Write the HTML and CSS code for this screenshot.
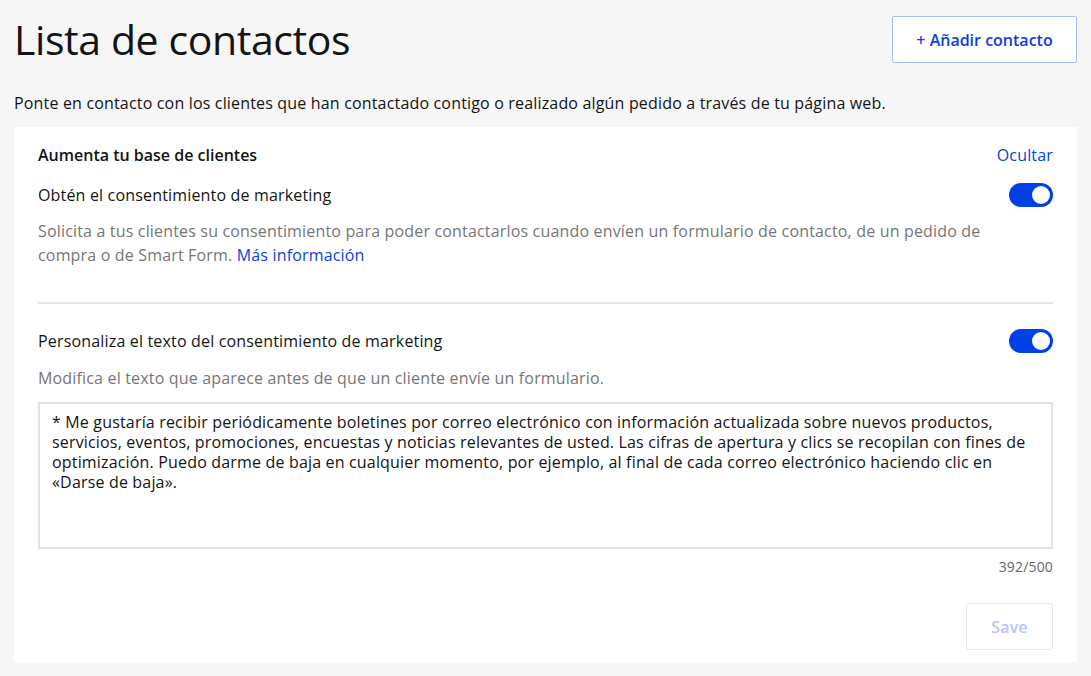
FILE: index.html
```html
<html>

<head>
    <title>Lista de contactos</title>
    <link rel="stylesheet" href="styles.css">
</head>

<body>
    <div id="content">
        <div class="header">
            <h1>Lista de contactos</h1>
            <button class="add">+ Añadir contacto</button>
        </div>
        <p class="intro">Ponte en contacto con los clientes que han contactado contigo o realizado algún pedido a través de tu página web.</p>
        <div class="card">
            <div class="row title-row">
                <h2>Aumenta tu base de clientes</h2>
                <a class="link">Ocultar</a>
            </div>
            <div class="row">
                <span class="label">Obtén el consentimiento de marketing</span>
                <span class="toggle on"></span>
            </div>
            <p class="hint wide">Solicita a tus clientes su consentimiento para poder contactarlos cuando envíen un formulario de contacto, de un pedido de compra o de Smart Form. <a class="link">Más información</a></p>
            <hr class="divider">
            <div class="row">
                <span class="label">Personaliza el texto del consentimiento de marketing</span>
                <span class="toggle on"></span>
            </div>
            <p class="hint short">Modifica el texto que aparece antes de que un cliente envíe un formulario.</p>
            <textarea class="consent">* Me gustaría recibir periódicamente boletines por correo electrónico con información actualizada sobre nuevos productos, servicios, eventos, promociones, encuestas y noticias relevantes de usted. Las cifras de apertura y clics se recopilan con fines de optimización. Puedo darme de baja en cualquier momento, por ejemplo, al final de cada correo electrónico haciendo clic en «Darse de baja».</textarea>
            <div class="counter">392/500</div>
            <div class="actions">
                <button class="save" disabled>Save</button>
            </div>
        </div>
    </div>
</body>

</html>
```

FILE: styles.css
```css
body {
    margin: 0;
    background: #f6f6f6;
    color: #141414;
    font-family: "Open Sans", "Lato", sans-serif;
    font-size: 16px;
    letter-spacing: 0.17px;
}

#content {
    padding: 16px 14px 14px 14px;
    display: flex;
    flex-direction: column;
}

.header {
    display: flex;
    justify-content: space-between;
    align-items: flex-start;
}

.header h1 {
    margin: 0;
    padding-top: 3px;
    font-size: 41px;
    font-weight: 400;
    line-height: 1;
    letter-spacing: -0.4px;
}

button {
    font-family: inherit;
    letter-spacing: inherit;
    background: #fff;
    cursor: pointer;
}

.add {
    width: 185px;
    height: 47px;
    border: 1px solid #a9bcf8;
    border-radius: 2px;
    color: #0a3fe0;
    font-size: 16px;
    font-weight: 600;
    letter-spacing: 0;
}

.intro {
    margin: 28px 0 12px 0;
    line-height: 24px;
}

.card {
    background: #fff;
    padding: 16px 24px 12px 24px;
    display: flex;
    flex-direction: column;
}

.row {
    display: flex;
    justify-content: space-between;
    align-items: center;
    height: 24px;
}

.title-row {
    margin-bottom: 16px;
}

.title-row h2 {
    margin: 0;
    font-size: 16px;
    font-weight: 600;
    letter-spacing: 0;
}

.link {
    color: #0a3fe0;
    cursor: pointer;
}

.toggle {
    width: 44px;
    height: 24px;
    border-radius: 12px;
    background: #c8c8c8;
    position: relative;
}

.toggle.on {
    background: #0041e6;
}

.toggle::after {
    content: "";
    position: absolute;
    top: 3px;
    left: 3px;
    width: 18px;
    height: 18px;
    border-radius: 50%;
    background: #fff;
}

.toggle.on::after {
    left: auto;
    right: 3px;
}

.hint {
    margin: 12px 0 0 0;
    line-height: 24px;
    color: #767676;
}

.hint.wide {
    padding-right: 60px;
}

.divider {
    margin: 35px 0 25px 0;
    border: 0;
    border-top: 2px solid #e4e4e4;
}

.hint.short {
    margin: 13px 0 12px 0;
}

.consent {
    height: 147px;
    padding: 8px 12px;
    border: 2px solid #e2e2e2;
    border-radius: 0;
    resize: none;
    font-family: inherit;
    font-size: 16px;
    letter-spacing: inherit;
    line-height: 20px;
    color: #141414;
}

.counter {
    margin-top: 8px;
    text-align: right;
    font-size: 14px;
    color: #666;
}

.actions {
    display: flex;
    justify-content: flex-end;
    margin-top: 27px;
}

.save {
    width: 87px;
    height: 47px;
    border: 1px solid #e3e9fd;
    border-radius: 2px;
    color: #b4c6fa;
    font-size: 16px;
    font-weight: 600;
}
```
